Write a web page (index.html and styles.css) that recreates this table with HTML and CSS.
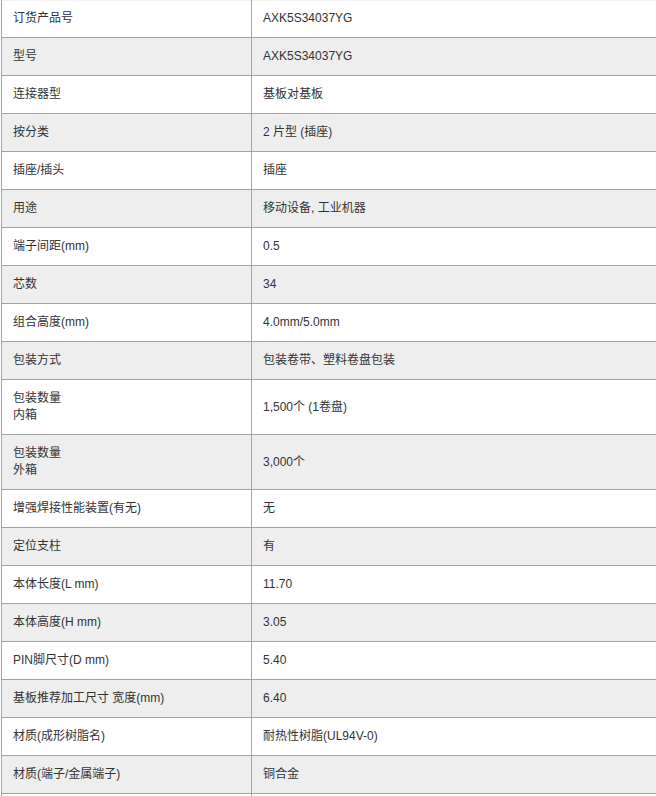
FILE: index.html
```html
<!DOCTYPE html>
<html lang="zh-CN">
<head>
<meta charset="utf-8">
<title>规格</title>
<link rel="stylesheet" href="styles.css">
</head>
<body>
<div class="wrap">
<table class="spec">
<tbody>
<tr class="first"><td class="k">订货产品号</td><td class="v">AXK5S34037YG</td></tr>
<tr class="alt"><td class="k">型号</td><td class="v">AXK5S34037YG</td></tr>
<tr><td class="k">连接器型</td><td class="v">基板对基板</td></tr>
<tr class="alt"><td class="k">按分类</td><td class="v">2 片型 (插座)</td></tr>
<tr><td class="k">插座/插头</td><td class="v">插座</td></tr>
<tr class="alt"><td class="k">用途</td><td class="v">移动设备, 工业机器</td></tr>
<tr><td class="k">端子间距(mm)</td><td class="v">0.5</td></tr>
<tr class="alt"><td class="k">芯数</td><td class="v">34</td></tr>
<tr><td class="k">组合高度(mm)</td><td class="v">4.0mm/5.0mm</td></tr>
<tr class="alt"><td class="k">包装方式</td><td class="v">包装卷带、塑料卷盘包装</td></tr>
<tr><td class="k">包装数量<br>内箱</td><td class="v">1,500个 (1卷盘)</td></tr>
<tr class="alt"><td class="k">包装数量<br>外箱</td><td class="v">3,000个</td></tr>
<tr><td class="k">增强焊接性能装置(有无)</td><td class="v">无</td></tr>
<tr class="alt"><td class="k">定位支柱</td><td class="v">有</td></tr>
<tr><td class="k">本体长度(L mm)</td><td class="v">11.70</td></tr>
<tr class="alt"><td class="k">本体高度(H mm)</td><td class="v">3.05</td></tr>
<tr><td class="k">PIN脚尺寸(D mm)</td><td class="v">5.40</td></tr>
<tr class="alt"><td class="k">基板推荐加工尺寸 宽度(mm)</td><td class="v">6.40</td></tr>
<tr><td class="k">材质(成形树脂名)</td><td class="v">耐热性树脂(UL94V-0)</td></tr>
<tr class="alt"><td class="k">材质(端子/金属端子)</td><td class="v">铜合金</td></tr>
<tr><td class="k">&nbsp;</td><td class="v">&nbsp;</td></tr>
</tbody>
</table>
</div>
</body>
</html>
```

FILE: styles.css
```css
html, body {
  margin: 0;
  padding: 0;
  background: #ffffff;
  overflow: hidden;
}
.wrap {
  padding-left: 1px;
}
.spec {
  border-collapse: collapse;
  width: 655px;
  font-family: "Liberation Sans", "Noto Sans CJK SC", sans-serif;
  font-size: 12px;
  line-height: 17px;
  color: #333333;
}
.spec td {
  border: 1px solid #a3a3a3;
  padding: 10px 11px;
  vertical-align: middle;
  text-align: left;
}
.spec td.v {
  border-right: none;
}
.spec tr.first td {
  border-top: none;
  box-shadow: inset 0 1px 0 #f2f2f2;
}
.spec td.k {
  width: 227px;
}
.spec tr.alt td {
  background: #eeeeee;
}
```
